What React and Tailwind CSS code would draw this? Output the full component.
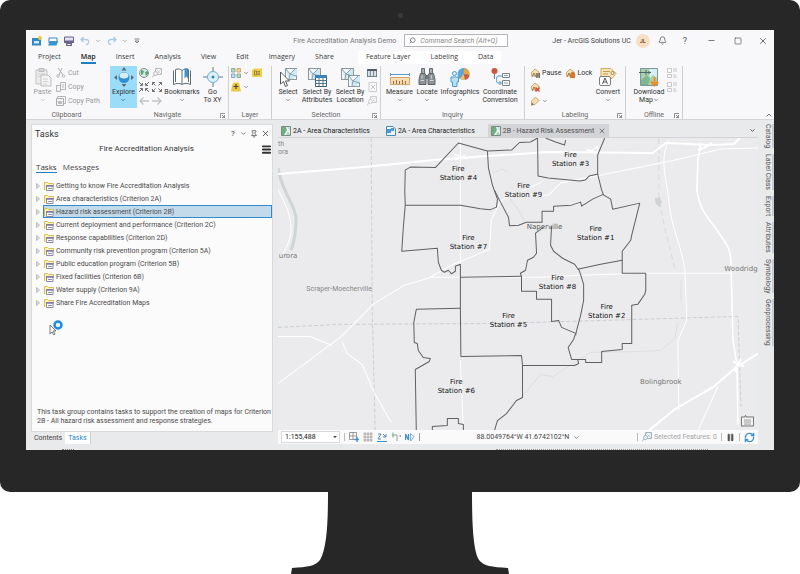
import React, { useState } from 'react';
import { Bell, ChevronDown, ChevronUp, Menu, Minus, Pause, Pin, RefreshCw, Search, Square, X } from 'lucide-react';

const tasks = [
  'Getting to know Fire Accreditation Analysis',
  'Area characteristics (Criterion 2A)',
  'Hazard risk assessment (Criterion 2B)',
  'Current deployment and performance (Criterion 2C)',
  'Response capabilities (Criterion 2D)',
  'Community risk prevention program (Criterion 5A)',
  'Public education program (Criterion 5B)',
  'Fixed facilities (Criterion 6B)',
  'Water supply (Criterion 9A)',
  'Share Fire Accreditation Maps'
];

const ribbonTabs = ['Project', 'Map', 'Insert', 'Analysis', 'View', 'Edit', 'Imagery', 'Share'];
const contextTabs = ['Feature Layer', 'Labeling', 'Data'];

const sidePanes = ['Catalog', 'Label Class', 'Export', 'Attributes', 'Symbology', 'Geoprocessing'];

const stations = [
  { id: 4, x: 458, y: 171 },
  { id: 3, x: 570, y: 157 },
  { id: 9, x: 523, y: 188 },
  { id: 1, x: 595, y: 231 },
  { id: 7, x: 468, y: 240 },
  { id: 8, x: 557, y: 280 },
  { id: 2, x: 606, y: 309 },
  { id: 5, x: 508, y: 318 },
  { id: 6, x: 456, y: 383 }
];

/* ---------- large ribbon icons, 20 x 20 ---------- */

const Icon = ({ size = 'w-5 h-5', box = '0 0 20 20', children }) => (
  <svg viewBox={box} fill="none" className={`${size} shrink-0`} aria-hidden="true">{children}</svg>
);

const PasteIcon = () => (
  <Icon>
    <path d="M3 3h11v14H3z" fill="#ececec" stroke="#c3c3c3" />
    <path d="M6 1.5h5v3H6z" fill="#d4d4d4" stroke="#bcbcbc" />
    <path d="M5 7h7M5 9.500h3" stroke="#cfcfcf" />
    <path d="M8 8h7l3 3v8H8z" fill="#f4f4f4" stroke="#bdbdbd" />
    <path d="M10 12h5M10 14.500h5M10 17h4" stroke="#cfcfcf" />
  </Icon>
);

const ExploreIcon = () => (
  <Icon>
    <path d="M10 0l2.500 3.500h-5zM10 20l2.500-3h-5zM0 10.500l3-2.500v5zM20 10.500l-3-2.500v5z" fill="#5d6a73" />
    <circle cx="10" cy="10.500" r="5.500" fill="#2f8fd0" />
    <ellipse cx="10" cy="8.500" rx="4.500" ry="3" fill="#d6effb" />
  </Icon>
);

const BookmarksIcon = () => (
  <Icon>
    <path d="M1.500 3.500v14c3-1.500 6-1.500 8.500 0 2.500-1.500 5.500-1.500 8.500 0v-14" fill="#fff" stroke="#5f6b73" />
    <path d="M3.500 15V2.500c3-1 5-.5 6.500 1v13.500M10 3.500c2-1.500 4-2 6.500-1V15" stroke="#5f6b73" />
    <path d="M12.500 1.500h3.500v10l-1.700-2-1.800 2z" fill="#3c93cf" />
  </Icon>
);

const GoToIcon = () => (
  <Icon>
    <path d="M10 0v4M10 16v4M0 10h4M16 10h4" stroke="#6b7278" />
    <circle cx="10" cy="10" r="5.500" fill="#dff2fb" stroke="#68acd6" />
    <circle cx="10" cy="10" r="1.500" fill="#3187c6" />
  </Icon>
);

const MapSheet = ({ x = 0, y = 0, w = 12, h = 11 }) => (
  <g transform={`translate(${x} ${y})`}>
    <rect x=".5" y=".5" width={w} height={h} fill="#f4f7f8" stroke="#8d979e" />
    <path d={`M1 1l4 5 5-5h2v6l-4 ${h - 7}H4z`} fill="#cfe8f5" />
    <path d={`M1 1l4 5 5-5M5 6l-1 ${h - 6}M5 6l${w - 5} 2`} stroke="#79909c" strokeWidth=".8" />
  </g>
);

const SelectIcon = () => (
  <Icon>
    <MapSheet x={7} y={1} w={11} h={11} />
    <path d="M2.500 5v12l3-2.500 2 5 2-1-2-4.500h4z" fill="#fff" stroke="#555" />
  </Icon>
);

const SelectAttributesIcon = () => (
  <Icon>
    <MapSheet x={1} y={1} />
    <path d="M8.500 8.500h11v11h-11z" fill="#fff" stroke="#3f5f78" />
    <path d="M8 8h12v3H8z" fill="#3b82b8" />
    <path d="M8.500 13.500h11M8.500 16.500h11M12 11v8M16 11v8" stroke="#54748c" />
  </Icon>
);

const SelectLocationIcon = () => (
  <Icon>
    <MapSheet x={1} y={1} />
    <MapSheet x={8} y={8} w={11} h={11} />
  </Icon>
);

const MeasureIcon = () => (
  <Icon>
    <path d="M.5 7.500h19M.5 6v3M19.500 6v3" stroke="#569bcb" />
    <path d="M.5 10.500h19v7H.5z" fill="#f6dcb5" stroke="#d4a56b" />
    <path d="M3.500 17v-3M6.500 17v-4M9.500 17v-3M12.500 17v-4M15.500 17v-3" stroke="#9b6f3d" />
  </Icon>
);

const LocateIcon = () => (
  <Icon>
    <path d="M4.500 1.500h3v5h-3zM12.500 1.500h3v5h-3z" fill="#a4aaae" stroke="#656d73" />
    <path d="M3.500 6.500h4.500l1 2v9H2v-5zM12 6.500h4.500l1.500 6v5h-7v-9z" fill="#8d9499" stroke="#5d656b" />
    <path d="M8.500 8h3v4h-3z" fill="#6c747a" />
    <path d="M3.500 13.500h3.500M13 13.500h3.500M5 8.500v3M14.500 8.500v3" stroke="#d3d7d9" />
  </Icon>
);

const InfographicsIcon = () => (
  <Icon>
    <circle cx="13.500" cy="7" r="6" fill="#5aa7d8" />
    <path d="M13.500 7l1-6a6 6 0 015 7z" fill="#f0a43c" />
    <path d="M13.500 7l6 1a6 6 0 01-4.500 5z" fill="#cf5b3c" />
    <path d="M13.500 7l1.500 6a6 6 0 01-5-1.500z" fill="#f3c06a" />
    <circle cx="4.500" cy="6.500" r="2" fill="#d5effa" stroke="#4b9bcc" />
    <path d="M1 10h7.500v5H7v4.500H2.500V15H1z" fill="#b8e0f4" stroke="#4b9bcc" />
  </Icon>
);

const CoordinateIcon = () => (
  <Icon>
    <circle cx="4.500" cy="4" r="3" fill="#cf5638" />
    <path d="M4.500 7v5" stroke="#777" />
    <path d="M12 9H8c-2 0-2 7 0 7h3M9.500 14l2 2-2 2" stroke="#3e94cb" />
    <path d="M12.500 6.500h7v4h-7zM12.500 13.500h7v5h-7z" fill="#fafafa" stroke="#7d858a" />
    <path d="M14 8.500h4M14 16h4" stroke="#9aa1a5" />
  </Icon>
);

const ConvertIcon = () => (
  <Icon>
    <path d="M3 1.500h10l5 5-4 5H3z" fill="#fae5b5" stroke="#cfa965" />
    <path d="M5 4.500h7M5 7h5" stroke="#c59a55" />
    <circle cx="14.500" cy="6" r="1.500" fill="#fff" stroke="#9b7d4a" />
    <rect x="1.500" y="9.500" width="11" height="9" rx="1.500" fill="#fff" stroke="#777f85" />
    <path d="M4.500 17l2.500-6 2.500 6M5.500 15h3" stroke="#555" />
  </Icon>
);

const DownloadMapIcon = () => (
  <Icon>
    <path d="M1.500 1.500h17v17h-17z" fill="#a7d3ae" stroke="#7e9499" />
    <path d="M10 2h8v9l-4-3-3 3z" fill="#d8eef7" />
    <path d="M2 13l6-5 3 4-2 6H2z" fill="#7fb890" />
    <path d="M0 5.500h12M7 3v5M10 4v3" stroke="#50646b" />
    <path d="M15.500 10v8M12 14.500l3.500 4 3.500-4" stroke="#ee8a2b" strokeWidth="2" />
  </Icon>
);

/* ---------- small icons, 10 x 10 ---------- */

const Small = ({ children, size = 'w-2.5 h-2.5' }) => <Icon size={size} box="0 0 10 10">{children}</Icon>;

const CutIcon = () => (
  <Small>
    <path d="M2 0l5 7M6 0L3 7" stroke="#aaa" />
    <circle cx="2" cy="8" r="1.300" stroke="#bbb" />
    <circle cx="7.500" cy="8" r="1.300" stroke="#bbb" />
  </Small>
);

const CopyIcon = () => (
  <Small>
    <path d="M.5 3.500h4v6h-4zM4.500.5h5v7h-5z" fill="#f5f5f5" stroke="#b5b5b5" />
    <path d="M6 3h2M6 5h2" stroke="#bbb" />
  </Small>
);

const CopyPathIcon = () => (
  <Small>
    <path d="M1.500.5h8v7h-8z" stroke="#b5b5b5" />
    <path d="M.5 2.500h7v7h-7z" fill="#f5f5f5" stroke="#aaa" />
    <path d="M2 5l1 3 1-3 1 3 1-3" stroke="#999" strokeWidth=".7" />
  </Small>
);

const GlobeIcon = () => (
  <Small>
    <circle cx="5" cy="5" r="4.500" fill="#d5ebe2" stroke="#858f8d" />
    <path d="M2 2l3 1-1 3-2 1zM6 4l3-1v3L7 8z" fill="#5f9f75" />
  </Small>
);

const MagnifyMapIcon = ({ color = '#bcbcbc' }) => (
  <Small>
    <path d="M3.500.5h6v6h-6z" stroke={color} />
    <path d="M4 1l5 5M9 1L5 6" stroke={color} strokeWidth=".6" />
    <circle cx="3.500" cy="5.500" r="2" fill="#f4f4f4" stroke={color} />
    <path d="M2 7L0 9.500" stroke={color} />
  </Small>
);

const ArrowsInIcon = () => (
  <Small>
    <path d="M0 0l3 3M3.500 1v2.500H1M10 0L7 3M6.500 1v2.500H9M0 10l3-3M3.500 9V6.500H1M10 10L7 7M6.500 9V6.500H9" stroke="#6f6f6f" />
  </Small>
);

const ArrowsOutIcon = () => (
  <Small>
    <path d="M3.500 3.500l-3-3M.5 3V.5H3M6.500 3.500l3-3M9.500 3V.5H7M3.500 6.500l-3 3M.5 7v2.500H3M6.500 6.500l3 3M9.500 7v2.500H7" stroke="#6f6f6f" />
  </Small>
);

const ArrowLeftIcon = () => <Small><path d="M10 5H1M4.500 1.500L1 5l3.500 3.500" stroke="#c3c3c3" strokeWidth="1.300" /></Small>;
const ArrowRightIcon = () => <Small><path d="M0 5h9M5.500 1.500L9 5 5.500 8.500" stroke="#c3c3c3" strokeWidth="1.300" /></Small>;

const BasemapIcon = () => (
  <Small>
    <path d="M.5.5h3.500V4H.5zM6 6h3.500v3.500H6z" fill="#b9d3c0" stroke="#8fae9a" />
    <path d="M6 .5h3.500V4H6z" fill="#eed29c" stroke="#cfac6c" />
    <path d="M.5 6H4v3.500H.5z" fill="#c3dbe9" stroke="#84a9c3" />
  </Small>
);

const AddDataIcon = () => (
  <Small>
    <path d="M1 3l2-2.500h5L10 9.500H0z" fill="#eac944" />
    <path d="M5 2v5M2.500 4.500h5" stroke="#4d4730" strokeWidth="1.200" />
  </Small>
);

const GraphicsIcon = () => (
  <Small>
    <path d="M0 2l2-1.500h8V9H0z" fill="#efcf4d" />
    <path d="M2.500 3h2v4h-2zM5.500 3.500H8M5.500 5H8M5.500 6.500H8" stroke="#7b6e38" strokeWidth=".8" />
  </Small>
);

const TableIcon = () => (
  <Small>
    <path d="M0 1h10v8H0z" fill="#d8e3ea" />
    <path d="M0 1h10v2H0z" fill="#4e5b64" />
    <path d="M3.300 3v6M6.600 3v6M.5 1v8M9.500 1v8M0 8.500h10" stroke="#5f6d76" strokeWidth=".8" />
  </Small>
);

const ClearIcon = () => (
  <Small>
    <path d="M2 .5h7.500v9H2z" stroke="#cdcdcd" />
    <path d="M4 3l4 4M4 7l4-4" stroke="#c6c6c6" />
  </Small>
);

const LabelTagIcon = ({ badge }) => (
  <Small>
    <path d="M1 5l4-4 4 3v4H2z" fill="#f6dfb4" stroke="#c79b5a" strokeWidth=".8" />
    <path d="M2 9l2-4 2 4" stroke="#77613d" strokeWidth=".8" />
    {badge === 'pause' && <path d="M7 5v5M9.200 5v5" stroke="#555" strokeWidth="1.300" />}
    {badge === 'lock' && <path d="M5.500 6h4.500v4H5.500zM6.500 6V4.500h2.500V6" fill="#e07b2e" stroke="#c4661f" strokeWidth=".6" />}
    {badge === 'remove' && <path d="M5.500 5.500l4 4M9.500 5.500l-4 4" stroke="#dd4b32" strokeWidth="1.500" />}
  </Small>
);

const PencilTagIcon = () => (
  <Small>
    <path d="M1.500 9V5l4-4L9 4.500l-4 4z" fill="#f6dfb4" stroke="#c79b5a" strokeWidth=".8" />
    <path d="M1 9.500l1-3 2 2z" fill="#777" />
  </Small>
);

const FormIcon = () => (
  <Small>
    <path d="M.5.5h4v4h-4zM.5 6.500h4v3h-4zM6 1h4M6 3h4M6 7h3M6 9h4" stroke="#c9c9c9" />
  </Small>
);

const TaskGroupIcon = () => (
  <Small>
    <path d="M.5 9V1.500h3l1 1h5V5" fill="#faf1c5" stroke="#dcc24a" />
    <path d="M2.500 4.500h6.500v5H2.500z" fill="#fff" stroke="#8d87a8" />
    <path d="M2 5h7.500" stroke="#8177ad" strokeWidth="1.500" />
    <path d="M4 7.500h4" stroke="#8a93b5" />
  </Small>
);

const MapDocIcon = () => (
  <Small>
    <path d="M.5.500h9v9h-9z" fill="#f3f6f4" stroke="#7d8b86" />
    <path d="M1 1h4l1 3-3 5H1z" fill="#6fae80" />
    <path d="M6 1h3v4z" fill="#bfe0ee" />
    <path d="M5 9l2-4 2 4z" fill="#a8d4b4" />
  </Small>
);

const LayoutDocIcon = () => (
  <Small>
    <path d="M.5.5h6.500l2.500 2.500v6.500h-9z" fill="#e8f3fa" stroke="#4c88b3" />
    <path d="M1 3h4v4H1zM5 2h3v3H5z" fill="#4b9bd1" />
  </Small>
);

const LauncherIcon = () => (
  <Icon size="w-[5px] h-[5px]" box="0 0 5 5">
    <path d="M.5 5V.5H5M2 2l2.500 2.500M4.500 2v2.500H2" stroke="#666" strokeWidth=".7" />
  </Icon>
);

const Caret = () => <ChevronDown className="w-[6px] h-[6px] shrink-0" />;

/* ---------- ribbon parts ---------- */

const RibbonGroup = ({ label, width, launcher, divider = true, children }) => (
  <div className={`${width} shrink-0 flex flex-col ${divider ? 'border-r border-[#cfcfd1]' : ''}`}>
    <div className="h-[45px] flex justify-center">{children}</div>
    <div className="h-2 flex items-center justify-center relative text-[#666]">
      {label}
      {launcher && (
        <button className="absolute right-[3px] top-[2px]" aria-label={`${label} options`}>
          <LauncherIcon />
        </button>
      )}
    </div>
  </div>
);

const BigButton = ({ icon, lines, width, caret, inlineCaret, className = '' }) => (
  <button className={`${width} shrink-0 h-[42px] pt-px flex flex-col items-center ${className}`}>
    {icon}
    <span className="mt-px flex flex-col items-center">
      {lines.map((line, i) => (
        <span key={line} className="flex items-center whitespace-nowrap">
          {line}
          {inlineCaret && i === lines.length - 1 && <Caret />}
        </span>
      ))}
      {caret && <span className="h-2 flex items-center"><Caret /></span>}
    </span>
  </button>
);

const SmallButton = ({ icon, label, caret, name }) => (
  <button className="h-3.5 flex items-center gap-0.5 whitespace-nowrap" aria-label={label || name}>
    {icon}
    {label}
    {caret && <Caret />}
  </button>
);

const TitleBar = () => (
  <header className="h-[21px] flex items-center pl-[6px] pr-[6px]">
    <div className="flex-1 flex items-center gap-[6px]">
      <button aria-label="New project">
        <Small>
          <path d="M0 2h9v7.500H0z" fill="#3287c4" />
          <path d="M2 5h5v2.500H2z" fill="#d4ebf8" />
          <circle cx="8" cy="2" r="2" fill="#edc744" />
        </Small>
      </button>
      <button aria-label="Open project">
        <Small>
          <path d="M1 2h8v5H1z" fill="#fff" stroke="#3287c4" />
          <path d="M0 9.500L2 5h8L8.500 9.500z" fill="#3d93cf" />
        </Small>
      </button>
      <button aria-label="Save project">
        <Small>
          <path d="M.5 1h9v5h-9z" fill="#e4e1f0" stroke="#6a6391" />
          <path d="M0 4.500h10V7H0zM2 7h6v3H2z" fill="#6a6391" />
          <path d="M3.500 8.500h3" stroke="#fff" />
        </Small>
      </button>
      <button className="flex items-center gap-[5px] text-[#666]" aria-label="Undo">
        <Small><path d="M3.500 1L1 3.500 3.500 6M1 3.500h5c4 0 3 5 0 5" stroke="#a9cbe4" strokeWidth="1.300" /></Small>
        <Caret />
      </button>
      <button className="flex items-center gap-[5px] text-[#666]" aria-label="Redo">
        <Small><path d="M6.500 1L9 3.500 6.500 6M9 3.500H4c-4 0-3 5 0 5" stroke="#a9cbe4" strokeWidth="1.300" /></Small>
        <Caret />
      </button>
      <button aria-label="Customize quick access toolbar">
        <Icon size="w-[6px] h-[6px]" box="0 0 6 6"><path d="M.5 1h5M1 3l2 2 2-2z" stroke="#666" strokeWidth=".8" /></Icon>
      </button>
    </div>
    <h1 className="mr-2 text-[#777]">Fire Accreditation Analysis Demo</h1>
    <label className="w-[104px] h-[13px] mr-11 flex items-center gap-1 px-1 border border-[#b5b5b8] bg-white">
      <Search className="w-[7px] h-[7px] -scale-x-100 shrink-0 text-[#444]" />
      <input
        className="w-full min-w-0 bg-transparent italic outline-none placeholder:text-[#888]"
        placeholder="Command Search (Alt+Q)"
        aria-label="Command Search"
      />
    </label>
    <div className="flex items-center text-[#555]">
      <span className="text-[#444] mr-[5px]">Jer - ArcGIS Solutions UC</span>
      <span className="w-3.5 h-3.5 rounded-full bg-[#f8dfc3] flex items-center justify-center text-[5px] font-bold text-[#6b4a33]">JL</span>
      <button className="ml-2" aria-label="Notifications"><Bell className="w-[9px] h-[9px]" /></button>
      <button className="ml-4 text-[9px] leading-[10px]" aria-label="Help">?</button>
      <button className="ml-5" aria-label="Minimize"><Minus className="w-[9px] h-[9px]" /></button>
      <button className="ml-[18px]" aria-label="Maximize"><Square className="w-2 h-2" /></button>
      <button className="ml-4" aria-label="Close"><X className="w-[10px] h-[10px]" /></button>
    </div>
  </header>
);

const RibbonTab = ({ name, active, onSelect }) => (
  <button
    onClick={() => onSelect(name)}
    className={`h-[13px] border-b-2 whitespace-nowrap ${active ? 'border-[#1e7fc2] font-semibold text-[#222]' : 'border-transparent text-[#3a3a3a]'}`}
  >
    {name}
  </button>
);

const Ribbon = () => {
  const [tab, setTab] = useState('Map');

  return (
    <div className="bg-[#f8f8fa] border-b border-[#d4d5d8]">
      <TitleBar />
      <nav className="h-[15px] flex items-start pl-3 font-['Open_Sans','Noto_Sans',sans-serif]">
        <div className="flex gap-5">
          {ribbonTabs.map(name => <RibbonTab key={name} name={name} active={tab === name} onSelect={setTab} />)}
        </div>
        <div className="ml-6 px-2 flex gap-5 bg-white">
          {contextTabs.map(name => <RibbonTab key={name} name={name} active={tab === name} onSelect={setTab} />)}
        </div>
      </nav>
      <div className="flex text-[#333]">
        <RibbonGroup label="Clipboard" width="w-[81px]" divider={false}>
          <div className="w-full flex text-[#999]">
            <BigButton icon={<PasteIcon />} lines={['Paste']} width="w-[27px]" caret className="ml-[3px]" />
            <div className="flex flex-col">
              <SmallButton icon={<CutIcon />} label="Cut" />
              <SmallButton icon={<CopyIcon />} label="Copy" />
              <SmallButton icon={<CopyPathIcon />} label="Copy Path" />
            </div>
          </div>
        </RibbonGroup>
        <RibbonGroup label="Navigate" width="w-[122px]" launcher>
          <div className="w-full pl-[3px] flex">
            <BigButton icon={<ExploreIcon />} lines={['Explore']} width="w-[27px]" caret className="bg-[#9bdcf9]" />
            <div className="mx-[2px] grid grid-cols-2 gap-x-[3px] content-start">
              <SmallButton icon={<GlobeIcon />} name="Full extent" />
              <SmallButton icon={<MagnifyMapIcon />} name="Zoom to selection" />
              <SmallButton icon={<ArrowsInIcon />} name="Fixed zoom in" />
              <SmallButton icon={<ArrowsOutIcon />} name="Fixed zoom out" />
              <SmallButton icon={<ArrowLeftIcon />} name="Previous extent" />
              <SmallButton icon={<ArrowRightIcon />} name="Next extent" />
            </div>
            <BigButton icon={<BookmarksIcon />} lines={['Bookmarks']} width="w-[36px]" caret />
            <BigButton icon={<GoToIcon />} lines={['Go', 'To XY']} width="w-[25px]" />
          </div>
        </RibbonGroup>
        <RibbonGroup label="Layer" width="w-[43px]">
          <div className="grid grid-cols-2 gap-x-[3px] content-start">
            <SmallButton icon={<BasemapIcon />} name="Basemap" caret />
            <SmallButton icon={<GraphicsIcon />} name="Add graphics layer" />
            <SmallButton icon={<AddDataIcon />} name="Add data" caret />
          </div>
        </RibbonGroup>
        <RibbonGroup label="Selection" width="w-[109px]" launcher>
          <BigButton icon={<SelectIcon />} lines={['Select']} width="w-[25px]" caret />
          <BigButton icon={<SelectAttributesIcon />} lines={['Select By', 'Attributes']} width="w-[33px]" />
          <BigButton icon={<SelectLocationIcon />} lines={['Select By', 'Location']} width="w-[33px]" />
          <div className="flex flex-col">
            <SmallButton icon={<TableIcon />} name="Attribute table" />
            <SmallButton icon={<ClearIcon />} name="Clear selection" />
            <SmallButton icon={<MagnifyMapIcon color="#cdcdcd" />} name="Zoom to selected" />
          </div>
        </RibbonGroup>
        <RibbonGroup label="Inquiry" width="w-[144px]">
          <BigButton icon={<MeasureIcon />} lines={['Measure']} width="w-[29px]" caret />
          <BigButton icon={<LocateIcon />} lines={['Locate']} width="w-[26px]" caret />
          <BigButton icon={<InfographicsIcon />} lines={['Infographics']} width="w-[40px]" caret />
          <BigButton icon={<CoordinateIcon />} lines={['Coordinate', 'Conversion']} width="w-[40px]" />
        </RibbonGroup>
        <RibbonGroup label="Labeling" width="w-[101px]" launcher>
          <div className="w-full pl-[5px] flex">
            <div className="flex flex-col">
              <div className="flex gap-1">
                <SmallButton icon={<LabelTagIcon badge="pause" />} label="Pause" />
                <SmallButton icon={<LabelTagIcon badge="lock" />} label="Lock" />
              </div>
              <SmallButton icon={<LabelTagIcon badge="remove" />} name="View unplaced" />
              <SmallButton icon={<PencilTagIcon />} name="More labeling" caret />
            </div>
            <BigButton icon={<ConvertIcon />} lines={['Convert']} width="w-[31px]" caret />
          </div>
        </RibbonGroup>
        <RibbonGroup label="Offline" width="w-[57px]" launcher>
          <BigButton icon={<DownloadMapIcon />} lines={['Download', 'Map']} width="w-[36px]" inlineCaret />
          <div className="flex flex-col">
            <SmallButton icon={<FormIcon />} name="Sync" />
            <SmallButton icon={<FormIcon />} name="Remove replica" />
          </div>
        </RibbonGroup>
        <button className="ml-auto mr-px self-end" aria-label="Collapse ribbon">
          <ChevronUp className="w-2 h-2" />
        </button>
      </div>
    </div>
  );
};

const TasksPane = () => {
  const [selected, setSelected] = useState(2);

  return (
    <aside className="w-[242px] shrink-0 flex flex-col">
      <div className="flex-1 flex flex-col bg-[#fbfbfc] border border-[#d9dadc] text-[#4a4a4a]">
        <div className="h-[17px] flex items-center pl-[3px] pr-[2px]">
          <h2 className="flex-1 text-[9px] text-[#333]">Tasks</h2>
          <div className="flex items-center gap-[3px] text-[#333]">
            <button className="w-2 text-[8px]" aria-label="Pane help">?</button>
            <button aria-label="Pane menu"><ChevronDown className="w-[7px] h-[7px]" /></button>
            <button aria-label="Pin pane"><Pin className="w-2 h-2" /></button>
            <button aria-label="Close pane"><X className="w-[9px] h-[9px]" /></button>
          </div>
        </div>
        <div className="h-[14px] flex items-center">
          <h3 className="flex-1 text-center text-[8px] text-[#333]">Fire Accreditation Analysis</h3>
          <button aria-label="Options"><Menu className="w-[11px] h-[11px] text-[#333]" strokeWidth={4} /></button>
        </div>
        <div className="mt-1.5 mb-1.5 px-1 flex gap-1.5 font-['Open_Sans','Noto_Sans',sans-serif] text-[8px] leading-[10px]">
          <button className="border-b border-[#1e7fc2] text-[#333]">Tasks</button>
          <button className="border-b border-transparent">Messages</button>
        </div>
        <ul>
          {tasks.map((task, i) => (
            <li key={task} className="h-[13px] flex items-center pl-1">
              <svg viewBox="0 0 4 6" className="w-1 h-1.5 mr-[3px] shrink-0" aria-hidden="true">
                <path d="M.5.5L3.500 3 .5 5.500z" fill="#ddd" stroke="#aaa" strokeWidth=".7" />
              </svg>
              <button
                onClick={() => setSelected(i)}
                className={`h-[13px] flex-1 flex items-center gap-0.5 border text-left whitespace-nowrap ${i === selected ? 'bg-[#c3daeb] border-[#2f8ccb]' : 'border-transparent'}`}
              >
                <TaskGroupIcon />
                {task}
              </button>
            </li>
          ))}
        </ul>
        <p className="mt-auto pl-[5px] pb-[5px] leading-[9px]">
          This task group contains tasks to support the creation of maps for Criterion 2B - All hazard risk assessment and response strategies.
        </p>
      </div>
      <div className="h-[13px] flex items-start text-[#444]">
        <button className="h-3 px-[3px]">Contents</button>
        <button className="h-3 px-[3px] bg-white border-r border-[#d0d0d0] text-[#1e88cf]">Tasks</button>
      </div>
    </aside>
  );
};

const MapCanvas = () => (
  <svg
    viewBox="278 138 479 292"
    preserveAspectRatio="xMinYMin slice"
    className="absolute inset-0 w-full h-full"
    fill="none"
    role="img"
    aria-label="Fire station districts around Naperville"
  >
    {/* river and lake */}
    <path d="M278 168c3 22 17 36 18 50 0 12-2 24-5 32" stroke="#cfd4d6" strokeWidth="3" />
    <path d="M654 198l5-1 2 5-2 5-4-4z" fill="#d0d3d5" />

    {/* county and township lines */}
    <g stroke="#c6c7c9" strokeWidth=".8" strokeDasharray="4 2">
      <path d="M371 138l1 170 3 122" />
      <path d="M278 327l60-3 160-1 140-4 99-3 3 90" />
    </g>
    <path d="M658 138v60l6 30 10 40" stroke="#d3d4d6" strokeWidth=".8" strokeDasharray="6 3" />
    <g stroke="#d8d9db" strokeWidth=".7">
      <path d="M493 173l8-4 6 3M507 195l13 18 4 9" />
      <path d="M520 398l20-24 12 2 38-24 50-1 20-1 14-12 3-16M680 300v-20" />
    </g>

    {/* highways */}
    <g stroke="#fff" strokeLinejoin="round">
      <path d="M278 174l86-7 70-7 53-4 60-4 105 1 13-10 46 2 22-1 6-6" strokeWidth="2" />
      <path d="M700 143l-3 17-1 30c3 20 10 26 20 40 8 12 13 16 14 30l2 80 4 24 1 60" strokeWidth="1.600" />
      <path d="M757 353l-22 14-22 19-38 22-27 22" strokeWidth="2" />
      <path d="M732 361l11 5M740 358l-6 13M697 150l8-3 6-4M586 150l8 2" strokeWidth="2" />
    </g>
    <g stroke="#fff" strokeWidth="1" strokeLinejoin="round">
      <path d="M668 140c-10 20-2 40 0 60 2 30 12 40 16 70l2 50-9 20 1 70" />
      <path d="M757 148l-37 1-50 12-60 12-50 10-12 12h-28" />
      <path d="M460 138v130M460 360l3 70" />
      <path d="M278 383l62-46 34-34 30-18 24-7 23-13 38-16 2-30 10-19 40-18" />
      <path d="M430 277h110l40-2 60-2h90" />
      <path d="M278 336h32l22 9M342 341l5 12 15 11 12 28 17 30" />
      <path d="M278 189c8 16 14 28 13 42-1 10-4 16-8 22" />
      <path d="M717 386l-20 44M597 174v-28l-8 6" />
      <path d="M453 154l14 5M455 160l10-5" />
    </g>

    {/* district boundaries */}
    <g stroke="#5f6062" strokeWidth="1" strokeLinejoin="round">
      <path d="M405 170l5-3 25 .5 23-24.500 29 8 1 17 4 17 5 14-1 8-6 2.500-10-1-20-3.500H405l-.5-14z" />
      <path d="M487 151l24-1 8-7.500 11-.5 7-4 .5 38 10 2 32 3 5-1 4-4 9-2" />
      <path d="M545 138l10 4 9 3 1-5M604 138l-7 17v19l4 16 2 5 7 4 2 10 27-6-3 12-5 20-1 5-8.500 11v22H645v17l-1 4-7 10-6 1v38h-9.500v6l-20.500 2v11h-16v-3h-14l-3.500-12 5.500-8 2-6" />
      <path d="M494 190l6 12 8 15 1 8.500 9-.5 8-3h15.500V211H553v-5l18-1 9-3 1 4 11-7 11-5" />
      <path d="M551 226l-1 19 3 6 9 7 12 6 5 7 4 13v16l-3 15-4 15-1 5M577 269l23-5 21.500-4M543 227l-8 6 1 20-3 4-6 3-2 10-5 3 1 4v14h15v8h15v22l7-1 3 7 14 6" />
      <path d="M405 205l-2 23-1.500 23 35.500-3 1 14 3 8 3 2 4-2 3 3.500 4-2.500v-5l5-2v44l.5 48 60.500-1 1 10v32l-6 3-10 13-9 7-3 10M460 277l61-1M522 365h52l4-2-1-4" />
      <path d="M460 308l-44 1-2.500 13 .5 20 3 1 1 7 5 7 7 1-1 3-14 8 1 61M432 430v-4l15-1v-7h11v5l5 1v6" />
    </g>

    {/* place names */}
    <g fill="#777" fontSize="7" textAnchor="middle" className="font-['DejaVu_Sans',sans-serif]">
      <text x="544" y="229" fill="#555">Naperville</text>
      <text x="660" y="383">Bolingbrook</text>
      <text x="740" y="271">Woodridg</text>
      <text x="288" y="258">urora</text>
    </g>
    <text x="339" y="291" fontSize="7" textAnchor="middle" fill="#888">Scraper-Moecherville</text>
    <g fill="#888" fontSize="7">
      <text x="278" y="146">th</text>
      <text x="278" y="154">ora</text>
    </g>

    <g fill="#111" fontSize="7" textAnchor="middle" className="font-['DejaVu_Sans',sans-serif]">
      {stations.map(({ id, x, y }) => (
        <text key={id} x={x} y={y}>
          <tspan x={x}>Fire</tspan>
          <tspan x={x} dy="9">{`Station #${id}`}</tspan>
        </text>
      ))}
    </g>

    {/* map notes */}
    <path d="M740.500 425.500v-9h3l1-1.500 1 1.500h7v9z" fill="#f3f3f4" stroke="#777" />
    <path d="M743 419.500h7M743 421.500h7M743 423.500h7" stroke="#888" strokeWidth=".8" />
  </svg>
);

const ViewTab = ({ icon, name, active }) => (
  <div className={`h-[13px] flex items-center gap-1 px-[3px] whitespace-nowrap ${active ? 'bg-[#d3d4d7] text-[#4d4d4d]' : 'text-[#222]'}`}>
    <button className="flex items-center gap-0.5">
      {icon}
      {name}
    </button>
    {active && <button aria-label={`Close ${name}`}><X className="w-2 h-2" /></button>}
  </div>
);

const StatusBar = () => (
  <div className="h-3.5 flex items-center gap-1 px-[3px] bg-[#fafafb] text-[#444]">
    <div className="w-[59px] relative flex items-center">
      <select aria-label="Map scale" className="w-full h-3 px-[3px] appearance-none border border-[#d8d8da] bg-white text-[#222]">
        <option>1:155,488</option>
      </select>
      <svg viewBox="0 0 4 2" className="absolute right-[3px] w-1 h-0.5 pointer-events-none" aria-hidden="true">
        <path d="M0 0h4L2 2z" fill="#444" />
      </svg>
    </div>
    <span className="w-px h-2 bg-[#bbb]" />
    <button aria-label="Constraints">
      <Small><path d="M.5.5h7v7h-7zM.5 4h7M4 .5v7" stroke="#999" /><path d="M8 5v5M5.500 7.500h4.500" stroke="#3a92d0" strokeWidth="1.300" /></Small>
    </button>
    <button aria-label="Grid">
      <Small><path d="M2 0v10M5 0v10M8 0v10M0 2h10M0 5h10M0 8h10" stroke="#999" strokeWidth=".8" /></Small>
    </button>
    <button aria-label="Snapping">
      <Small><path d="M0 9.500h10" stroke="#3a92d0" /><path d="M1 2h3L1 7h3M6 2l3 3M9 2v3H6" stroke="#4d8db8" /></Small>
    </button>
    <button aria-label="Corrections">
      <Small><path d="M1 3h5v6" stroke="#999" /><path d="M2 .5v5" stroke="#6fb06f" /><path d="M8.500 4h1.500" stroke="#555" /></Small>
    </button>
    <button aria-label="Inference">
      <Small><path d="M.5 8V2l3 6V2" stroke="#3a92d0" strokeWidth="1.300" /><path d="M5.500 1v8M6 2l3 2.500L6 9" stroke="#7fb6d8" /></Small>
    </button>
    <span className="w-px h-2 bg-[#999]" />
    <button className="flex-1 flex items-center justify-center gap-1">
      88.0049764°W 41.6742102°N
      <ChevronDown className="w-[7px] h-[7px]" />
    </button>
    <span className="w-px h-2 bg-[#bbb]" />
    <span className="flex items-center gap-0.5 text-[#a5a5a7]">
      <MagnifyMapIcon color="#9cb6c8" />
      Selected Features: 0
    </span>
    <span className="w-px h-2 bg-[#bbb]" />
    <button aria-label="Pause drawing"><Pause className="w-[9px] h-[9px] fill-[#555] text-[#555]" strokeWidth={1} /></button>
    <span className="w-px h-2 bg-[#bbb]" />
    <button aria-label="Refresh"><RefreshCw className="w-[11px] h-[11px] text-[#3a92d0]" strokeWidth={3} /></button>
  </div>
);

const MapPane = () => (
  <main className="flex-1 min-w-0 flex flex-col">
    <div className="h-[14px] flex items-start border-b border-[#d2d3d6]">
      <div className="flex-1 flex gap-2.5">
        <ViewTab icon={<MapDocIcon />} name="2A - Area Characteristics" />
        <ViewTab icon={<LayoutDocIcon />} name="2A - Area Characteristics" />
        <ViewTab icon={<MapDocIcon />} name="2B - Hazard Risk Assessment" active />
      </div>
      <button className="mt-[3px] mr-[2px]" aria-label="Open views"><ChevronDown className="w-[7px] h-[7px]" /></button>
    </div>
    <div className="flex-1 relative overflow-hidden bg-[#ebebed]">
      <MapCanvas />
    </div>
    <StatusBar />
    <div className="h-px" />
  </main>
);

const SidePanes = () => (
  <nav className="w-[16px] shrink-0 flex flex-col gap-1.5 text-[#555]">
    {sidePanes.map(name => (
      <button
        key={name}
        className="self-end text-left border-r-2 border-[#cbccd3] whitespace-nowrap [writing-mode:vertical-rl]"
      >
        {name}
      </button>
    ))}
  </nav>
);

const App = () => (
  <div className="min-h-screen flex flex-col bg-white font-[Roboto,'Open_Sans',sans-serif] text-[7px] leading-[8px]">
    <div className="flex-1 flex flex-col rounded-[10px] bg-[#272727] px-[26px] pb-[42px]">
      <div className="h-[30px] flex items-center justify-center">
        <span className="w-[5px] h-[5px] rounded-full bg-[#3a3a3a]" />
      </div>
      <div className="flex-1 flex flex-col overflow-hidden bg-[#e9eaec]">
        <Ribbon />
        <div className="flex-1 flex pt-1 pl-[5px]">
          <TasksPane />
          <div className="w-[5px] shrink-0" />
          <MapPane />
          <SidePanes />
        </div>
        <div className="h-[5px] pt-1 flex">
          <div className="w-3 ml-9 border-t border-dotted border-[#777]" />
          <div className="w-[212px] ml-auto mr-[66px] border-t border-dotted border-[#999]" />
        </div>
      </div>
    </div>
    {/* monitor stand */}
    <div className="shrink-0 flex justify-center">
      <svg viewBox="0 0 220 82" className="w-[220px] h-[82px]" aria-hidden="true">
        <path d="M38 0h144c0 30 1 58 7 68 5 6 12 7 29 8l1 6H1l1-6c16-1 23-2 28-8 7-12 8-38 8-68z" fill="#272727" />
      </svg>
    </div>
    {/* busy pointer */}
    <svg viewBox="0 0 16 18" className="fixed left-[48px] top-[318px] w-4 h-[18px] pointer-events-none" aria-hidden="true">
      <circle cx="10" cy="7" r="3.500" fill="#e2f3fd" stroke="#1c8ade" strokeWidth="2.500" />
      <path d="M2 7v9l2-2 2 3 1-1-2-3h3z" fill="#fff" stroke="#555" strokeWidth=".8" />
    </svg>
  </div>
);

export default App;
